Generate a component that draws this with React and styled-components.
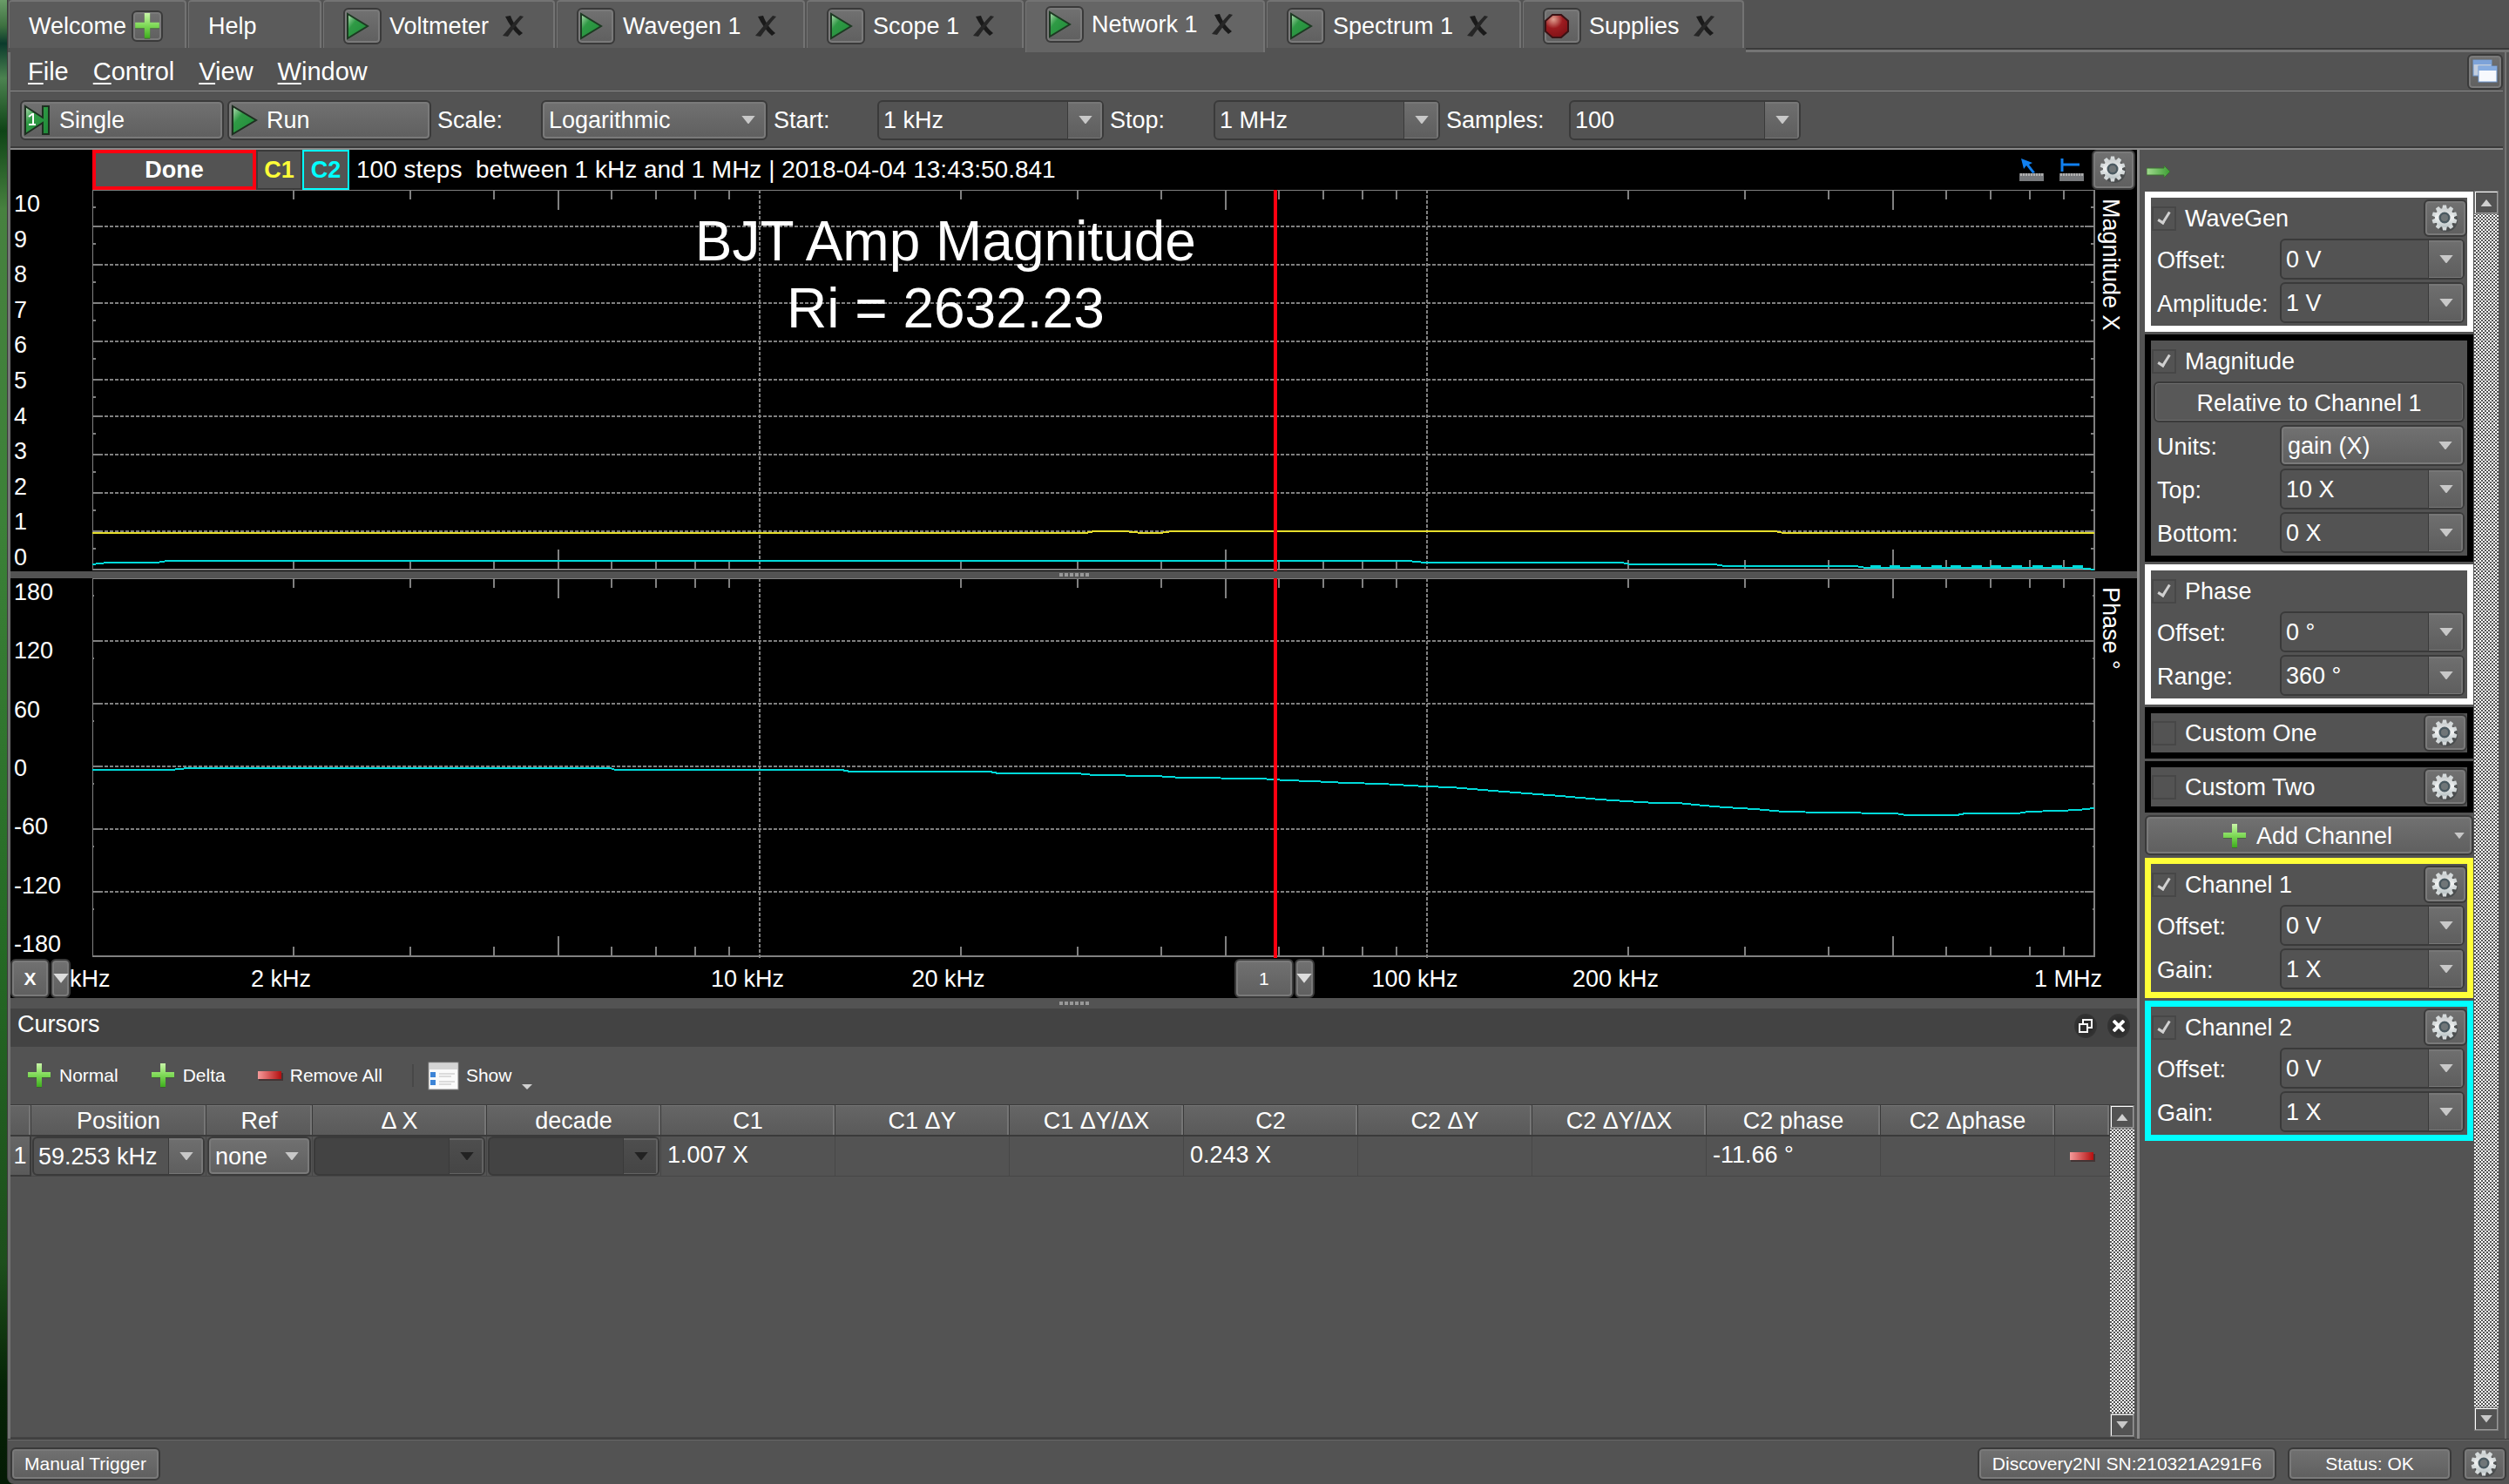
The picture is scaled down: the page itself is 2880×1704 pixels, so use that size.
import React, { useId } from "react";
import styled, { createGlobalStyle, css } from "styled-components";

const c = {
  bg: "#535353",
  dark: "#434343",
  edge: "#3a3a3a",
  line: "#848484",
  grid: "#808080",
  yellow: "#ffff38",
  cyan: "#00ffff",
};

const Global = createGlobalStyle`
  *, *::before, *::after { box-sizing: border-box; }
  body { margin: 0; background: ${c.bg}; }
  button, input, select { font: inherit; color: inherit; margin: 0; }
`;

const raised = css`
  background: linear-gradient(#717171, #5f5f5f);
  border: 2px solid ${c.edge};
  border-radius: 6px;
  box-shadow: inset 0 0 0 2px #7a7a7a;
`;

/* ---------- frame ---------- */
const Desktop = styled.div`
  display: flex;
  height: 100vh;
  min-height: 1400px;
  padding-left: 8px;
  font: 27px/32px "Liberation Sans", Arial, sans-serif;
  color: #fff;
  background: linear-gradient(#6a9c68 0, #3d7040 30px, #0b3a2c 50px, #4c8350 90px, #0f4416 150px, #47813f 240px,
    #3c8138 600px, #256a25 1080px, #1d4f1c 1450px, #062406 1590px, #041a04 100%);
`;
const AppWindow = styled.div`
  flex: 1;
  min-width: 0;
  display: flex;
  flex-direction: column;
  background: ${c.bg};
  border-left: 1px solid ${c.edge};
  border-bottom-left-radius: 8px;
`;
const Frame = styled.div`
  flex: 1;
  min-height: 0;
  display: flex;
  flex-direction: column;
  margin-right: 3px;
  padding-right: 2px;
  border-left: 3px solid #747474;
  border-right: 2px solid #747474;
`;

/* ---------- tabs ---------- */
const TabBar = styled.nav`
  display: flex;
  align-items: flex-start;
  height: 60px;
  gap: 2px;
  padding-left: 1px;
`;
const Tab = styled.div`
  flex: none;
  display: flex;
  align-items: center;
  width: ${(p) => p.$w}px;
  height: ${(p) => (p.$active ? 60 : 55)}px;
  padding: ${(p) => (p.$active ? "0 0 6px" : "3px 0 0")} 22px;
  background: ${(p) => (p.$active ? "#656565" : "#5b5b5b")};
  border: 2px solid #737373;
  border-width: 2px 2px 0 1px;
  border-radius: 4px 4px 0 0;
`;
const TabName = styled.a`
  color: inherit;
  text-decoration: none;
  white-space: nowrap;
`;
const TabFill = styled.div`
  flex: 1;
  height: 60px;
  border-bottom: 3px solid #747474;
  box-shadow: inset 0 -2px 0 ${c.edge};
`;
const TabButton = styled.button`
  ${raised}
  display: grid;
  place-items: center;
  width: ${(p) => p.$w || 44}px;
  height: ${(p) => p.$h || 42}px;
  margin: ${(p) => p.$m || "0 9px 0 0"};
  padding: 0;
`;
const CloseButton = styled.button`
  display: grid;
  margin-left: 15px;
  padding: 0;
  border: 0;
  background: none;
`;

/* ---------- menu and toolbar ---------- */
const MenuBar = styled.div`
  display: flex;
  align-items: center;
  gap: 28px;
  height: 45px;
  padding-left: 20px;
  border-bottom: 1px solid #8a8a8a;
  font-size: 29px;
`;
const MenuItem = styled.button`
  padding: 0;
  border: 0;
  background: none;
`;
const Mnemonic = styled.span`
  text-decoration: underline;
  text-decoration-thickness: 2px;
  text-underline-offset: 3px;
`;
const IconButton = styled.button`
  ${raised}
  flex: none;
  display: grid;
  place-items: center;
  width: ${(p) => p.$w || 50}px;
  height: ${(p) => p.$h || 43}px;
  margin-left: ${(p) => (p.$inline ? 0 : "auto")};
  padding: 0;
`;
const ToolBar = styled.div`
  display: flex;
  align-items: center;
  height: 67px;
  padding: 0 0 0 11px;
  border-bottom: 2px solid #8a8a8a;
  box-shadow: inset 0 -2px 0 ${c.edge};
`;
const ToolButton = styled.button`
  ${raised}
  display: flex;
  align-items: center;
  gap: 9px;
  width: 234px;
  height: 46px;
  margin-right: 4px;
  padding: 0 2px;
  text-align: left;
`;
const ToolLabel = styled.label`
  width: ${(p) => p.$w || 119}px;
  margin-left: ${(p) => p.$ml || 7}px;
`;

/* ---------- fields ---------- */
const FieldBox = styled.div`
  display: flex;
  width: ${(p) => (p.$w ? p.$w + "px" : "100%")};
  height: ${(p) => p.$h || 47}px;
  border: 2px solid ${c.edge};
  border-radius: 6px;
  background: ${(p) => (p.$off ? "#434343" : c.bg)};
  overflow: hidden;
`;
const FieldInput = styled.input`
  flex: 1;
  min-width: 0;
  padding: 0 0 0 5px;
  border: 0;
  outline: 0;
  background: none;
`;
const FieldDrop = styled.button`
  flex: none;
  display: grid;
  place-items: center;
  width: 40px;
  padding: 0;
  border: 0;
  border-left: 1px solid ${c.edge};
  background: ${(p) => (p.$off ? "linear-gradient(#4e4e4e,#454545)" : "linear-gradient(#6f6f6f,#5e5e5e)")};
  box-shadow: inset -2px 0 0 ${(p) => (p.$off ? "#626262" : "#777")}, inset 0 2px 0 ${(p) => (p.$off ? "#626262" : "#777")},
    inset 0 -1px 0 ${(p) => (p.$off ? "#626262" : "#777")};
`;
const SelectBox = styled.div`
  display: grid;
  width: ${(p) => (p.$w ? p.$w + "px" : "100%")};
  height: ${(p) => p.$h || 47}px;
  align-items: center;
  & > * { grid-area: 1 / 1; }
  & > svg { justify-self: end; margin-right: 14px; pointer-events: none; }
`;
const SelectInput = styled.select`
  ${raised}
  appearance: none;
  width: 100%;
  height: 100%;
  padding: 1px 0 0 7px;
`;

/* ---------- work area ---------- */
const Work = styled.div`
  flex: 1;
  min-height: 0;
  display: grid;
  grid-template-columns: minmax(0, 1fr) 420px;
`;
const Left = styled.main`
  display: flex;
  flex-direction: column;
  min-height: 0;
`;
const PlotHeader = styled.div`
  display: flex;
  align-items: stretch;
  height: 46px;
  padding: 0 2px 0 94px;
  background: #000;
`;
const DoneBadge = styled.div`
  display: grid;
  place-items: center;
  width: 188px;
  border: 4px solid #ff0010;
  background: ${c.bg};
  font-weight: bold;
`;
const ChannelToggle = styled.button`
  width: ${(p) => (p.$on ? 54 : 53)}px;
  padding: 0;
  border: ${(p) => (p.$on ? "2px solid " + c.cyan : "2px solid " + c.edge)};
  background: ${c.bg};
  color: ${(p) => p.$c};
  font-weight: bold;
`;
const RunInfo = styled.div`
  align-self: center;
  margin-left: 8px;
  font-size: 28px;
  white-space: pre;
`;
const HeaderTools = styled.div`
  display: flex;
  align-items: center;
  margin-left: auto;
`;
const FlatTool = styled.button`
  display: grid;
  place-items: center;
  width: 46px;
  padding: 0;
  border: 0;
  background: none;
`;
const PlotRow = styled.section`
  flex: none;
  display: grid;
  grid-template-columns: 94px minmax(0, 1fr) 48px;
  height: ${(p) => p.$h}px;
  background: #000;
`;
const Scale = styled.div`
  display: flex;
  flex-direction: column;
  justify-content: space-between;
  padding-left: 4px;
`;
const Canvas = styled.div`
  position: relative;
  svg { display: block; width: 100%; height: 100%; }
`;
const Title = styled.div`
  position: absolute;
  top: 21px;
  left: 42.6%;
  transform: translateX(-50%);
  font-size: 64px;
  line-height: 77px;
  text-align: center;
  white-space: nowrap;
`;
const AxisName = styled.div`
  padding: 10px 14px 0 0;
  writing-mode: vertical-rl;
`;
const CursorLine = styled.div`
  position: absolute;
  top: 0;
  bottom: 0;
  width: 4px;
  margin-left: -2px;
  background: #ff0010;
`;
const Splitter = styled.div`
  flex: none;
  display: flex;
  justify-content: center;
  align-items: center;
  gap: 2px;
  height: ${(p) => p.$h}px;
  background: ${c.bg};
`;
const Dot = styled.i`
  width: 4px;
  height: 4px;
  background: #999;
`;
const XAxis = styled.div`
  flex: none;
  display: grid;
  grid-template-columns: 94px minmax(0, 1fr) 48px;
  height: 46px;
  background: #000;
`;
const XCorner = styled.div`
  z-index: 1;
  display: flex;
  align-items: flex-start;
  gap: 1px;
  padding: 1px 0;
`;
const XTrack = styled.div`
  position: relative;
`;
const XLabel = styled.span`
  position: absolute;
  top: 8px;
  ${(p) => (p.$end ? "right: -8px;" : "transform: translateX(-50%); margin-left: -14px;")}
  white-space: nowrap;
`;
const CursorHandle = styled.div`
  position: absolute;
  top: 1px;
  display: flex;
  margin-left: -47px;
  gap: 1px;
`;
const SmallButton = styled.button`
  ${raised}
  display: grid;
  place-items: center;
  width: ${(p) => p.$w}px;
  height: 45px;
  padding: 0;
  font-size: 21px;
  font-weight: ${(p) => (p.$bold ? "bold" : "normal")};
`;

/* ---------- cursor dock ---------- */
const DockTitle = styled.header`
  flex: none;
  display: flex;
  align-items: center;
  gap: 12px;
  height: 44px;
  padding: 0 8px 8px;
  background: ${c.dark};
`;
const RoundButton = styled.button`
  display: grid;
  place-items: center;
  width: 26px;
  height: 28px;
  margin-top: 4px;
  padding: 0;
  border: 0;
  border-radius: 50%;
  background: radial-gradient(#2c2c2c 40%, #3c3c3c);
  &:first-of-type { margin-left: auto; }
`;
const DockTools = styled.div`
  flex: none;
  display: flex;
  align-items: center;
  height: 66px;
  padding: 0 18px;
  font-size: 21px;
`;
const DockTool = styled.button`
  display: flex;
  align-items: center;
  gap: 8px;
  margin-right: ${(p) => p.$mr || 0}px;
  padding: 0;
  border: 0;
  background: none;
`;
const Rule = styled.i`
  width: 2px;
  height: 26px;
  margin-right: 16px;
  background: #474747;
`;
const TableArea = styled.div`
  flex: 1;
  min-height: 0;
  display: flex;
  margin-right: 3px;
  border-top: 1px solid ${c.edge};
  border-bottom: 2px solid ${c.dark};
`;
const TableWrap = styled.div`
  flex: 1;
  min-width: 0;
`;
const Table = styled.table`
  width: 100%;
  table-layout: fixed;
  border-collapse: separate;
  border-spacing: 0;
`;
const Th = styled.th`
  height: 36px;
  padding: 2px 0 0;
  line-height: 30px;
  font-weight: normal;
  white-space: nowrap;
  background: linear-gradient(#666, #5a5a5a);
  border: solid ${c.edge};
  border-width: 0 1px 2px 0;
  box-shadow: inset -2px 1px 0 #757575;
`;
const RowHead = styled.th`
  padding: 0;
  font-weight: normal;
  background: linear-gradient(#666, #5a5a5a);
  border: solid ${c.edge};
  border-width: 0 2px 2px 0;
`;
const Td = styled.td`
  height: 46px;
  padding: ${(p) => (p.$ctl ? "0 1px" : "0 0 4px 7px")};
  border: solid #474747;
  border-width: 0 1px 1px 0;
`;
const RemoveRow = styled.button`
  display: grid;
  width: 100%;
  place-items: center;
  padding: 0;
  border: 0;
  background: none;
`;

/* ---------- scroll bar ---------- */
const ScrollTrack = styled.div`
  flex: none;
  display: flex;
  flex-direction: column;
  justify-content: space-between;
  width: 28px;
  background: repeating-conic-gradient(#fff 0 25%, #555 0 50%) 0 0 / 4px 4px;
`;
const ScrollButton = styled.button`
  display: grid;
  place-items: center;
  height: 27px;
  padding: 0;
  border: 2px solid;
  border-color: #fff #999 #999 #fff;
  outline: 1px solid #777;
  outline-offset: -1px;
  background: ${c.bg};
`;

/* ---------- side panel ---------- */
const Side = styled.aside`
  display: flex;
  flex-direction: column;
  min-height: 0;
  border-left: 3px solid #8a8a8a;
`;
const SideTop = styled.div`
  height: 47px;
  padding: 16px 0 0 8px;
  svg { display: block; }
`;
const SideBody = styled.div`
  flex: 1;
  min-height: 0;
  display: flex;
  justify-content: space-between;
  padding: 0 5px 9px 6px;
`;
const Groups = styled.div`
  display: flex;
  flex-direction: column;
  gap: 3px;
  width: 377px;
  padding-top: 1px;
`;
const Group = styled.section`
  border: 7px solid ${(p) => p.$c};
`;
const GroupHead = styled.div`
  display: flex;
  align-items: center;
  gap: 10px;
  height: ${(p) => (p.$single ? 45 : 47)}px;
  padding-left: 1px;
`;
const Check = styled.input`
  appearance: none;
  display: grid;
  place-items: center;
  width: 28px;
  height: 28px;
  border: 2px solid #474747;
  &:checked::after {
    content: "";
    width: 8px;
    height: 16px;
    margin-top: -4px;
    border: solid #d0d0d0;
    border-width: 0 3px 3px 0;
    transform: rotate(32deg);
  }
`;
const GroupRow = styled.div`
  display: grid;
  grid-template-columns: 141px 212px;
  align-items: center;
  margin-bottom: 3px;
  padding-left: 7px;
  & > label { padding-top: 2px; }
`;
const Wide = styled.button`
  border: 2px solid ${c.edge};
  border-radius: 6px;
  box-shadow: inset 0 0 0 1px #6c6c6c;
  background: #585858;
  display: block;
  width: 357px;
  height: 47px;
  margin: 0 0 3px 3px;
  padding: 2px 0 0;
`;
const AddChannel = styled.button`
  ${raised}
  display: flex;
  align-items: center;
  justify-content: center;
  gap: 10px;
  height: 46px;
  padding: 2px 8px 0 86px;
  & > svg:last-child { margin-left: auto; }
`;

/* ---------- status bar ---------- */
const StatusBar = styled.footer`
  flex: none;
  display: flex;
  align-items: center;
  gap: 13px;
  height: 52px;
  padding: 4px 3px 0 3px;
  border-top: 1px solid ${c.edge};
  box-shadow: inset 0 1px 0 #6a6a6a;
  font-size: 21px;
`;
const StatusButton = styled.button`
  ${raised}
  width: ${(p) => p.$w}px;
  height: 38px;
  margin-right: ${(p) => (p.$first ? "auto" : 0)};
  padding: 0;
  white-space: nowrap;
`;

/* ---------- icons ---------- */
const HiddenSvg = styled.svg`
  position: absolute;
`;
const Defs = () => (
  <HiddenSvg width="0" height="0" aria-hidden="true">
    <defs>
      <linearGradient id="gPlay" x1="0" y1="0" x2="1" y2="1">
        <stop offset="0" stopColor="#b9e0b9" /><stop offset=".35" stopColor="#2f9a45" /><stop offset="1" stopColor="#1f8a38" />
      </linearGradient>
      <linearGradient id="gPlus" x1="0" y1="0" x2="0" y2="1">
        <stop offset="0" stopColor="#c9f5a8" /><stop offset=".5" stopColor="#7ed957" /><stop offset="1" stopColor="#3fae1e" />
      </linearGradient>
      <linearGradient id="gMinus" x1="0" y1="0" x2="1" y2="0">
        <stop offset="0" stopColor="#f59a9a" /><stop offset="1" stopColor="#b30f0f" />
      </linearGradient>
      <radialGradient id="gStop" cx=".35" cy=".2" r=".9">
        <stop offset="0" stopColor="#e0a090" /><stop offset=".45" stopColor="#9c1c20" /><stop offset="1" stopColor="#7c0f14" />
      </radialGradient>
      <linearGradient id="gGear" x1="0" y1="0" x2="0" y2="1">
        <stop offset="0" stopColor="#c9cdce" /><stop offset=".5" stopColor="#f1f3f3" /><stop offset="1" stopColor="#b9c3c5" />
      </linearGradient>
      <linearGradient id="gArrow" x1="0" y1="0" x2="1" y2="0">
        <stop offset="0" stopColor="#a2da90" /><stop offset="1" stopColor="#3c9e33" />
      </linearGradient>
    </defs>
  </HiddenSvg>
);
const Down = ({ w = 16, color = "#c8c8c8" }) => (
  <svg width={w} height={w * 0.6} viewBox="0 0 16 10"><path d="M0 0h16L8 10z" fill={color} /></svg>
);
const Up = () => <svg width="14" height="8" viewBox="0 0 16 10"><path d="M0 10h16L8 0z" fill="#d0d0d0" /></svg>;
const Play = () => (
  <svg width="32" height="36" viewBox="0 0 32 36">
    <path d="M2 2v32L29 18z" fill="url(#gPlay)" stroke="#1d2f20" strokeWidth="2" />
  </svg>
);
const Single = () => (
  <svg width="32" height="36" viewBox="0 0 32 36">
    <path d="M2 2v32l20-13v13h7V2h-7v13z" fill="url(#gPlay)" stroke="#1d2f20" strokeWidth="2" />
    <path d="M6 14l4-3h1v12h3M6 23h5" fill="none" stroke="#fff" strokeWidth="2" />
  </svg>
);
const TabPlay = () => (
  <svg width="40" height="34" viewBox="0 0 40 34">
    <path d="M3 3v28L26 17z" fill="url(#gPlay)" stroke="#1d3a22" strokeWidth="2" />
  </svg>
);
const Stop = () => (
  <svg width="40" height="34" viewBox="0 0 40 34">
    <path d="M9 4h10l8 7v12l-8 7H9l-8-7V11z" fill="url(#gStop)" stroke="#3a1214" strokeWidth="2" />
  </svg>
);
const CloseX = () => (
  <svg width="26" height="26" viewBox="0 0 26 26">
    <path d="M4 2l6-1c3 8 7 14 14 20l-4 3C13 18 8 10 4 2z" fill="#1a1a1a" />
    <path d="M21 1l4 1C18 9 13 17 7 25l-6-1C8 16 14 8 21 1z" fill="#262626" />
  </svg>
);
const Plus = ({ s = 30 }) => (
  <svg width={s} height={s} viewBox="0 0 30 30">
    <path d="M12 2h6v10h10v6H18v11h-6V18H2v-6h10z" fill="#2c5d1c" opacity=".5" />
    <path d="M12 1h6v10h10v6H18v11h-6V17H2v-6h10z" fill="url(#gPlus)" />
  </svg>
);
const Minus = () => (
  <svg width="30" height="14" viewBox="0 0 30 14">
    <rect x="2" y="4" width="28" height="9" fill="#3a2020" opacity=".6" />
    <rect x="1" y="2" width="27" height="9" fill="url(#gMinus)" />
  </svg>
);
const TEETH = [0, 36, 72, 108, 144, 180, 216, 252, 288, 324];
const Gear = () => (
  <svg width="34" height="34" viewBox="0 0 34 34">
    <circle cx="18" cy="19" r="13" fill="#20282c" opacity=".35" />
    {TEETH.map((a) => (
      <path key={a} d="M13 7L14 1.500h4L19 7z" transform={`rotate(${a} 16 16)`} fill="#d5dadb" />
    ))}
    <path
      fill="url(#gGear)" fillRule="evenodd"
      d="M16 5a11 11 0 1 0 0 22 11 11 0 1 0 0-22zm0 7a4 4 0 1 1 0 8 4 4 0 1 1 0-8z"
    />
    <circle cx="16" cy="16" r="5" fill="none" stroke="#4b5a61" strokeWidth="3" />
    <circle cx="16" cy="16" r="4" fill="#707678" />
  </svg>
);
const Windows = () => (
  <svg width="30" height="30" viewBox="0 0 30 30">
    <rect x="1" y="2" width="21" height="18" fill="#c3cede" stroke="#6f97cf" />
    <rect x="1" y="2" width="21" height="5" fill="#7da3d8" />
    <rect x="7" y="9" width="21" height="18" fill="#f7f9fd" stroke="#6f97cf" />
    <rect x="7" y="9" width="21" height="5" fill="#86ace0" />
  </svg>
);
const Ruler = ({ children }) => (
  <svg width="28" height="28" viewBox="0 0 28 28">
    {children}
    <rect x="0" y="18" width="28" height="9" fill="#77797c" />
    <path d="M1 19.500h26" stroke="#b0b0b0" strokeWidth="3" strokeDasharray="2 1" />
  </svg>
);
const ListIcon = () => (
  <svg width="36" height="33" viewBox="0 0 36 33">
    <rect x="1" y="1" width="34" height="31" fill="#fafafa" stroke="#8a8a8a" />
    <rect x="2" y="2" width="32" height="7" fill="#d4d4d4" />
    <path d="M3 12h6v6H3zM3 21h6v6H3z" fill="#3d84d6" />
    <path d="M13 14h18M13 17h14M13 23h18M13 26h14" stroke="#bdbdbd" />
  </svg>
);

/* ---------- field components ---------- */
const Combo = ({ id, label, value, w, h, off }) => (
  <FieldBox $w={w} $h={h} $off={off}>
    <FieldInput id={id} aria-label={label} defaultValue={value} disabled={off} />
    <FieldDrop $off={off} aria-label="Show values" disabled={off}><Down color={off ? "#222" : undefined} /></FieldDrop>
  </FieldBox>
);
const Select = ({ id, label, value, w, h }) => (
  <SelectBox $w={w} $h={h}>
    <SelectInput id={id} aria-label={label}><option>{value}</option></SelectInput>
    <Down />
  </SelectBox>
);

const TABS = [
  { name: "Welcome", w: 204, add: true },
  { name: "Help", w: 153 },
  { name: "Voltmeter", w: 266, icon: "play" },
  { name: "Wavegen 1", w: 285, icon: "play" },
  { name: "Scope 1", w: 249, icon: "play" },
  { name: "Network 1", w: 275, icon: "play", active: true },
  { name: "Spectrum 1", w: 292, icon: "play" },
  { name: "Supplies", w: 254, icon: "stop" },
];

/* ---------- plots ---------- */
const W = 2299;
const DECADE = 766;
const CURSOR = ((Math.log10(59.253) * DECADE) / W) * 100;

const ticks = [];
for (let d = 0; d < 3; d++) {
  for (let n = 2; n < 10; n++) ticks.push({ x: Math.round((d + Math.log10(n)) * DECADE), len: n === 5 ? 23 : 11 });
}

const Plot = ({ h, rows, minor, minorLen, children }) => (
  <svg viewBox={`0 0 ${W} ${h}`} preserveAspectRatio="none" shapeRendering="crispEdges">
    <g stroke={c.grid} strokeWidth="2" fill="none">
      {rows.map((y) => (
        <g key={y}>
          <path d={`M8 ${y}H${W - 10}`} strokeDasharray="4 2" />
          <path d={`M0 ${y}h8M${W - 12} ${y}h12`} />
        </g>
      ))}
      {minor.map((y) => <path key={y} d={`M0 ${y}h${minorLen}M${W} ${y}h-${minorLen + 1}`} />)}
      {[1, 2].map((d) => <path key={d} d={`M${d * DECADE} 0V${h}`} strokeDasharray="4 2" />)}
      {ticks.map((t) => <path key={t.x} d={`M${t.x} 0v${t.len}M${t.x} ${h - 2}v-${t.len}`} />)}
      <path d={`M0 ${h - 2}H${W}`} />
      <path d={`M${W - 1} 0V${h - 2}`} strokeWidth="3" />
      <path d={`M0 0.500H${W}M0.500 0V${h - 2}`} strokeWidth="1" />
    </g>
    <g fill="none" strokeWidth="2">{children}</g>
  </svg>
);

const MAG_ROWS = [42, 86, 130, 174, 218, 260, 304, 348, 392];
const MAG_MINOR = [20, 62, 106, 150, 194, 238, 280, 324, 368, 412];
const PH_ROWS = [72, 144, 216, 288, 360];
const PH_MINOR = [20, 92, 164, 236, 308, 380];
const C2_DASHES = [2041, 2063, 2087, 2111, 2133, 2157, 2179, 2203, 2227, 2249, 2273].map((x) => `M${x} 432h12`).join("");
const PHASE =
  "0,220 90,220 110,218 595,218 600,220 860,220 870,222 1030,222 1040,224 1130,224 1150,226 1220,227 1250,229 1340,230 1370,232 1400,233 1440,235 1480,236 1530,239 1560,240 1620,245 1685,250 1731,254 1760,256 1794,258 1820,258 1850,261 1874,263 1908,265 1942,268 1990,269 2070,270 2082,272 2140,272 2150,270 2210,270 2222,268 2256,267 2280,266 2298,264";

const X_LABELS = [
  ["1 kHz", 0], ["2 kHz", 0.301], ["10 kHz", 1], ["20 kHz", 1.301], ["100 kHz", 2], ["200 kHz", 2.301],
];

const COLUMNS = [
  ["Position", 201], ["Ref", 122], ["Δ X", 200], ["decade", 200], ["C1", 200], ["C1 ΔY", 200], ["C1 ΔY/ΔX", 200],
  ["C2", 200], ["C2 ΔY", 200], ["C2 ΔY/ΔX", 200], ["C2 phase", 200], ["C2 Δphase", 200],
];

const Scroller = () => (
  <ScrollTrack>
    <ScrollButton aria-label="Scroll up"><Up /></ScrollButton>
    <ScrollButton aria-label="Scroll down"><Down w={14} /></ScrollButton>
  </ScrollTrack>
);

const Panel = ({ name, color, checked, gear, action, rows = [] }) => {
  const id = useId();
  return (
    <Group $c={color}>
      <GroupHead $single={rows.length === 0}>
        <Check type="checkbox" id={id} defaultChecked={checked} />
        <label htmlFor={id}>{name}</label>
        {gear && <IconButton aria-label={`${name} options`}><Gear /></IconButton>}
      </GroupHead>
      {action && <Wide>{action}</Wide>}
      {rows.map(([label, value, kind]) => (
        <GroupRow key={label}>
          <label htmlFor={id + label}>{label}</label>
          {kind === "select" ? <Select id={id + label} value={value} /> : <Combo id={id + label} value={value} />}
        </GroupRow>
      ))}
    </Group>
  );
};

const Dots = () => [0, 1, 2, 3, 4, 5].map((i) => <Dot key={i} />);

export default function App() {
  return (
    <Desktop>
      <Global />
      <Defs />
      <AppWindow>
        <TabBar>
          {TABS.map((t) => (
            <Tab key={t.name} $w={t.w} $active={t.active}>
              {t.icon && (
                <TabButton aria-label={`Start ${t.name}`}>{t.icon === "play" ? <TabPlay /> : <Stop />}</TabButton>
              )}
              <TabName href="#">{t.name}</TabName>
              {t.add && <TabButton $w={36} $h={36} $m="0 0 0 6px" aria-label="New instrument"><Plus s={32} /></TabButton>}
              {t.icon && <CloseButton aria-label={`Close ${t.name}`}><CloseX /></CloseButton>}
            </Tab>
          ))}
          <TabFill />
        </TabBar>
        <Frame>
          <MenuBar>
            {["File", "Control", "View", "Window"].map((m) => (
              <MenuItem key={m}><Mnemonic>{m[0]}</Mnemonic>{m.slice(1)}</MenuItem>
            ))}
            <IconButton $w={41} $h={41} aria-label="Undock"><Windows /></IconButton>
          </MenuBar>
          <ToolBar>
            <ToolButton><Single />Single</ToolButton>
            <ToolButton><Play />Run</ToolButton>
            <ToolLabel htmlFor="scale" $ml={3}>Scale:</ToolLabel>
            <Select id="scale" value="Logarithmic" w={260} h={46} />
            <ToolLabel htmlFor="start">Start:</ToolLabel>
            <Combo id="start" value="1 kHz" w={260} h={46} />
            <ToolLabel htmlFor="stop">Stop:</ToolLabel>
            <Combo id="stop" value="1 MHz" w={260} h={46} />
            <ToolLabel htmlFor="samples" $w={141}>Samples:</ToolLabel>
            <Combo id="samples" value="100" w={266} h={46} />
          </ToolBar>
          <Work>
            <Left>
              <PlotHeader>
                <DoneBadge>Done</DoneBadge>
                <ChannelToggle $c={c.yellow}>C1</ChannelToggle>
                <ChannelToggle $c={c.cyan} $on>C2</ChannelToggle>
                <RunInfo>{"100 steps  between 1 kHz and 1 MHz | 2018-04-04 13:43:50.841"}</RunInfo>
                <HeaderTools>
                  <FlatTool aria-label="Quick measure">
                    <Ruler><path d="M2 1l13 5-4 2 7 9-3 1-7-9-3 4z" fill="#1180f0" /></Ruler>
                  </FlatTool>
                  <FlatTool aria-label="Vertical measure">
                    <Ruler><path d="M3 1v15M3 8h20" stroke="#1180f0" strokeWidth="3" /></Ruler>
                  </FlatTool>
                  <IconButton $h={46} $inline aria-label="Plot options"><Gear /></IconButton>
                </HeaderTools>
              </PlotHeader>
              <PlotRow $h={438}>
                <Scale>{[10, 9, 8, 7, 6, 5, 4, 3, 2, 1, 0].map((n) => <span key={n}>{n}</span>)}</Scale>
                <Canvas>
                  <Plot h={438} rows={MAG_ROWS} minor={MAG_MINOR} minorLen={4}>
                    <path d="M0 394H1140L1150 392H1185L1205 394H1225L1240 392H1931L1942 394H2298" stroke="#e6de2c" />
                    <path
                      d="M0 430L17 428H74L86 426H1510L1530 428H1755L1766 430H1862L1874 432H2024L2036 434H2280L2298 436"
                      stroke="#00dada"
                    />
                    <path d={C2_DASHES} stroke="#00dada" />
                  </Plot>
                  <CursorLine style={{ left: `${CURSOR}%` }} />
                  <Title>BJT Amp Magnitude<br />Ri = 2632.23</Title>
                </Canvas>
                <AxisName>Magnitude X</AxisName>
              </PlotRow>
              <Splitter $h={8}><Dots /></Splitter>
              <PlotRow $h={436}>
                <Scale>{[180, 120, 60, 0, -60, -120, -180].map((n) => <span key={n}>{n}</span>)}</Scale>
                <Canvas>
                  <Plot h={436} rows={PH_ROWS} minor={PH_MINOR} minorLen={2}>
                    <polyline points={PHASE} stroke="#00dada" />
                  </Plot>
                  <CursorLine style={{ left: `${CURSOR}%` }} />
                </Canvas>
                <AxisName>Phase °</AxisName>
              </PlotRow>
              <XAxis>
                <XCorner>
                  <SmallButton $w={45} $bold>X</SmallButton>
                  <SmallButton $w={23} aria-label="X axis options"><Down w={18} color="#ddd" /></SmallButton>
                </XCorner>
                <XTrack>
                  {X_LABELS.map(([t, d]) => (
                    <XLabel key={t} style={{ left: `${((d * DECADE) / W) * 100}%` }}>{t}</XLabel>
                  ))}
                  <XLabel $end>1 MHz</XLabel>
                  <CursorHandle style={{ left: `${CURSOR}%` }}>
                    <SmallButton $w={68}>1</SmallButton>
                    <SmallButton $w={23} aria-label="Cursor options"><Down w={18} color="#ddd" /></SmallButton>
                  </CursorHandle>
                </XTrack>
              </XAxis>
              <Splitter $h={12}><Dots /></Splitter>
              <DockTitle>
                Cursors
                <RoundButton aria-label="Float">
                  <svg width="16" height="16" viewBox="0 0 16 16" fill="none" stroke="#fff" strokeWidth="2">
                    <path d="M5 5V1h10v9h-4M1 6h9v9H1z" />
                  </svg>
                </RoundButton>
                <RoundButton aria-label="Close">
                  <svg width="14" height="14" viewBox="0 0 14 14" stroke="#fff" strokeWidth="4"><path d="M1 1l12 12M13 1L1 13" /></svg>
                </RoundButton>
              </DockTitle>
              <DockTools>
                <DockTool $mr={36}><Plus />Normal</DockTool>
                <DockTool $mr={36}><Plus />Delta</DockTool>
                <DockTool $mr={34}><Minus />Remove All</DockTool>
                <Rule />
                <DockTool><ListIcon />Show</DockTool>
                <svg width="24" height="36" viewBox="0 0 24 36"><path d="M12 28h12l-6 6z" fill="#d0d0d0" /></svg>
              </DockTools>
              <TableArea>
                <TableWrap>
                  <Table>
                    <colgroup>
                      <col width="24" />
                      {COLUMNS.map(([n, w]) => <col key={n} width={w} />)}
                      <col />
                    </colgroup>
                    <thead>
                      <tr>
                        <Th />
                        {COLUMNS.map(([n]) => <Th key={n} scope="col">{n}</Th>)}
                        <Th />
                      </tr>
                    </thead>
                    <tbody>
                      <tr>
                        <RowHead scope="row">1</RowHead>
                        <Td $ctl><Combo label="Position" value="59.253 kHz" h={45} /></Td>
                        <Td $ctl><Select label="Reference" value="none" h={45} /></Td>
                        <Td $ctl><Combo label="Delta X" value="" h={45} off /></Td>
                        <Td $ctl><Combo label="Decade" value="" h={45} off /></Td>
                        <Td>1.007 X</Td>
                        <Td /><Td />
                        <Td>0.243 X</Td>
                        <Td /><Td />
                        <Td>-11.66 °</Td>
                        <Td />
                        <Td $ctl><RemoveRow aria-label="Remove cursor"><Minus /></RemoveRow></Td>
                      </tr>
                    </tbody>
                  </Table>
                </TableWrap>
                <Scroller />
              </TableArea>
            </Left>
            <Side>
              <SideTop>
                <svg width="28" height="18" viewBox="0 0 28 18"><path d="M0 5h20V2l7 7-7 7v-3H0z" fill="url(#gArrow)" stroke="#3c6e33" /></svg>
              </SideTop>
              <SideBody>
                <Groups>
                  <Panel name="WaveGen" color="#fff" checked gear rows={[["Offset:", "0 V"], ["Amplitude:", "1 V"]]} />
                  <Panel
                    name="Magnitude" color="#000" checked action="Relative to Channel 1"
                    rows={[["Units:", "gain (X)", "select"], ["Top:", "10 X"], ["Bottom:", "0 X"]]}
                  />
                  <Panel name="Phase" color="#fff" checked rows={[["Offset:", "0 °"], ["Range:", "360 °"]]} />
                  <Panel name="Custom One" color="#000" gear />
                  <Panel name="Custom Two" color="#000" gear />
                  <AddChannel><Plus />Add Channel<Down w={12} /></AddChannel>
                  <Panel name="Channel 1" color={c.yellow} checked gear rows={[["Offset:", "0 V"], ["Gain:", "1 X"]]} />
                  <Panel name="Channel 2" color={c.cyan} checked gear rows={[["Offset:", "0 V"], ["Gain:", "1 X"]]} />
                </Groups>
                <Scroller />
              </SideBody>
            </Side>
          </Work>
        </Frame>
        <StatusBar>
          <StatusButton $w={172} $first>Manual Trigger</StatusButton>
          <StatusButton $w={343}>Discovery2NI SN:210321A291F6</StatusButton>
          <StatusButton $w={188}>Status: OK</StatusButton>
          <IconButton $h={38} $inline aria-label="Settings"><Gear /></IconButton>
        </StatusBar>
      </AppWindow>
    </Desktop>
  );
}
